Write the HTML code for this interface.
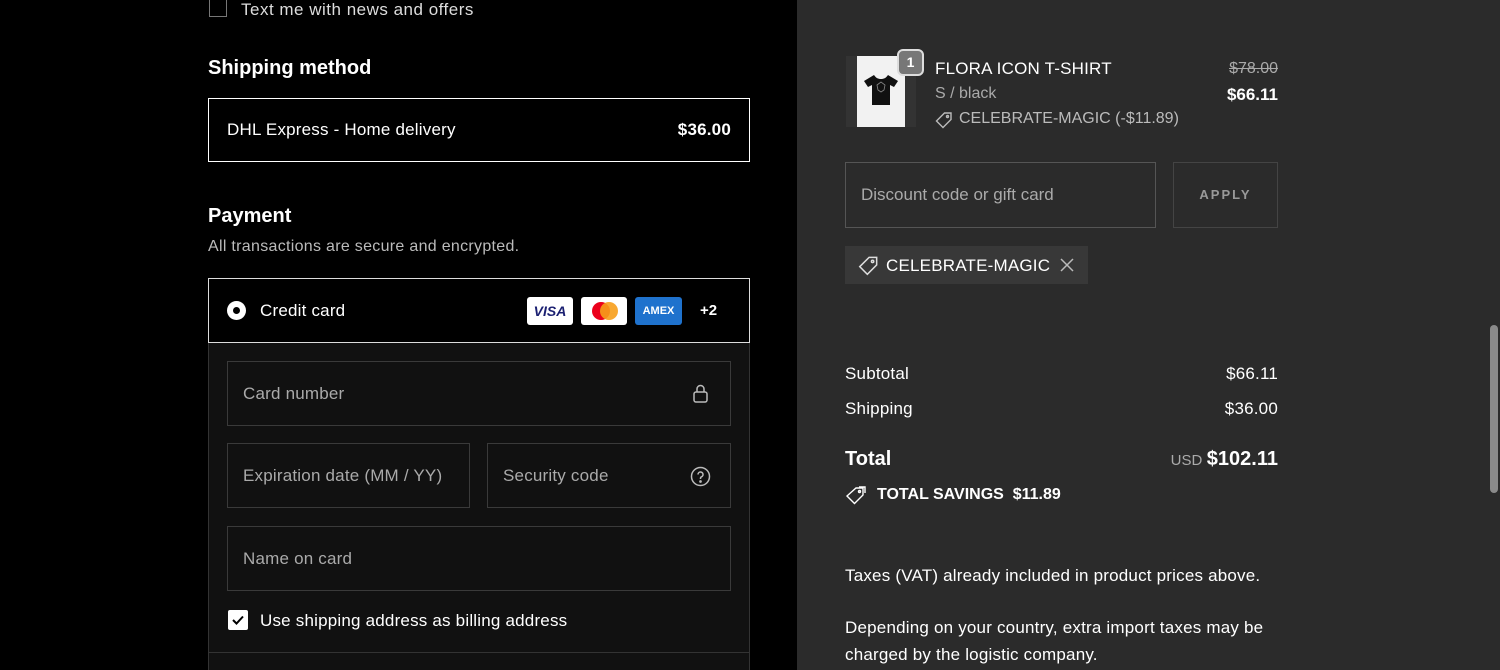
<!DOCTYPE html>
<html><head><style>
*{box-sizing:border-box;margin:0;padding:0}
body{width:1500px;height:670px;overflow:hidden;background:#000;font-family:"Liberation Sans",sans-serif;color:#fff;position:relative}
.a{position:absolute}
.right{left:797px;top:0;width:691px;height:670px;background:#2b2b2b}
.sb{left:1488px;top:0;width:12px;height:670px;background:#2b2b2b}
.thumb{left:1490px;top:325px;width:8px;height:168px;background:#8a8a8a;border-radius:4px}
.f{font-size:17px;letter-spacing:.2px}
.in{border:1px solid #3a3a3a;background:#111;color:#aaa;font-size:17px;letter-spacing:.2px;padding-left:15px;display:flex;align-items:center}
</style></head><body>
<div class="a" style="left:209px;top:0;width:18px;height:17px;border:1px solid #777;border-top:none"></div>
<div class="a f" style="left:241px;top:0;color:#ddd;letter-spacing:.5px">Text me with news and offers</div>
<div class="a" style="left:208px;top:57px;font-size:20px;font-weight:bold">Shipping method</div>
<div class="a" style="left:208px;top:98px;width:542px;height:64px;border:1px solid #fff;display:flex;align-items:center;justify-content:space-between;padding:0 18px"><span class="f">DHL Express - Home delivery</span><span class="f" style="font-weight:bold">$36.00</span></div>
<div class="a" style="left:208px;top:205px;font-size:20px;font-weight:bold">Payment</div>
<div class="a" style="left:208px;top:238px;font-size:16px;color:#bbb;letter-spacing:.3px">All transactions are secure and encrypted.</div>
<div class="a" style="left:208px;top:278px;width:542px;height:65px;border:1px solid #ddd"></div>
<div class="a" style="left:227px;top:301px;width:19px;height:19px;border-radius:50%;background:#fff"></div>
<div class="a" style="left:233px;top:307px;width:7px;height:7px;border-radius:50%;background:#000"></div>
<div class="a f" style="left:260px;top:301px">Credit card</div>
<div class="a" style="left:527px;top:297px;width:46px;height:28px;background:#fff;border-radius:3px;color:#1a1f71;font-weight:bold;font-style:italic;font-size:14px;text-align:center;line-height:28px">VISA</div>
<div class="a" style="left:581px;top:297px;width:46px;height:28px;background:#fff;border-radius:3px"></div>
<div class="a" style="left:592px;top:302px;width:18px;height:18px;border-radius:50%;background:#eb001b"></div>
<div class="a" style="left:600px;top:302px;width:18px;height:18px;border-radius:50%;background:#f79e1b;opacity:.9"></div>
<div class="a" style="left:635px;top:297px;width:47px;height:28px;background:#1f72cd;border-radius:3px;color:#fff;font-size:11px;font-weight:bold;text-align:center;line-height:28px">AMEX</div>
<div class="a" style="left:700px;top:302px;font-size:15px;font-weight:bold">+2</div>
<div class="a" style="left:208px;top:343px;width:542px;height:327px;background:#111;border-left:1px solid #333;border-right:1px solid #333"></div>
<div class="a in" style="left:227px;top:361px;width:504px;height:65px">Card number</div>
<svg class="a" style="left:692px;top:384px" width="18" height="20" viewBox="0 0 18 20" fill="none" stroke="#bbb" stroke-width="1.5"><rect x="2" y="8" width="13" height="10" rx="2"/><path d="M5 8V5a3.5 3.5 0 0 1 7 0v3"/></svg>
<div class="a in" style="left:227px;top:443px;width:243px;height:65px">Expiration date (MM / YY)</div>
<div class="a in" style="left:487px;top:443px;width:244px;height:65px">Security code</div>
<svg class="a" style="left:690px;top:466px" width="21" height="21" viewBox="0 0 21 21" fill="none" stroke="#bbb" stroke-width="1.5"><circle cx="10.5" cy="10.5" r="9"/><path d="M8 8.5a2.5 2.5 0 1 1 3.5 2.3c-.7.3-1 .8-1 1.5v.7"/><circle cx="10.5" cy="15.5" r=".6" fill="#bbb"/></svg>
<div class="a in" style="left:227px;top:526px;width:504px;height:65px">Name on card</div>
<div class="a" style="left:228px;top:610px;width:20px;height:20px;background:#fff;border-radius:2px"></div>
<svg class="a" style="left:228px;top:610px" width="20" height="20"><path d="M5 10l3.5 3.5L15 6.5" stroke="#000" stroke-width="2" fill="none"/></svg>
<div class="a f" style="left:260px;top:611px">Use shipping address as billing address</div>
<div class="a" style="left:208px;top:652px;width:542px;height:1px;background:#333"></div>

<div class="a right"></div><div class="a sb"></div><div class="a thumb"></div>
<div class="a" style="left:846px;top:56px;width:70px;height:71px;background:#333"></div>
<div class="a" style="left:857px;top:56px;width:48px;height:71px;background:#f2f2f2"></div>
<svg class="a" style="left:862px;top:73px" width="38" height="34" viewBox="0 0 38 34"><path d="M12 2l-10 6 4 6 4-2v20h18V12l4 2 4-6-10-6c-2 3-4 4-7 4s-5-1-7-4z" fill="#111"/><path d="M15 12l4-3 4 3-1 5-3 2-3-2z" fill="none" stroke="#888" stroke-width=".8"/></svg>
<div class="a" style="left:897px;top:49px;width:27px;height:27px;border-radius:6px;background:#777;border:2px solid #ddd;font-size:14px;font-weight:bold;text-align:center;line-height:23px">1</div>
<div class="a f" style="left:935px;top:59px">FLORA ICON T-SHIRT</div>
<div class="a" style="left:935px;top:85px;font-size:16px;color:#aaa">S / black</div>
<svg class="a" style="left:935px;top:111px" width="18" height="18" viewBox="0 0 18 18" fill="none" stroke="#bbb" stroke-width="1.4"><path d="M9.5 2H16v6.5L8 16.5 1.5 10z"/><circle cx="12.5" cy="5.5" r="1"/></svg>
<div class="a" style="left:959px;top:110px;font-size:16px;color:#bbb">CELEBRATE-MAGIC (-$11.89)</div>
<div class="a" style="left:1200px;top:60px;width:78px;text-align:right;font-size:16px;color:#aaa;text-decoration:line-through">$78.00</div>
<div class="a" style="left:1200px;top:85px;width:78px;text-align:right;font-size:17px;font-weight:bold">$66.11</div>
<div class="a" style="left:845px;top:162px;width:311px;height:66px;border:1px solid #555;color:#aaa;font-size:17px;padding-left:15px;line-height:64px">Discount code or gift card</div>
<div class="a" style="left:1173px;top:162px;width:105px;height:66px;border:1px solid #444;color:#999;font-size:13px;font-weight:bold;letter-spacing:2px;text-align:center;line-height:64px">APPLY</div>
<div class="a" style="left:845px;top:246px;width:243px;height:38px;background:#383838"></div>
<svg class="a" style="left:858px;top:255px" width="21" height="21" viewBox="0 0 18 18" fill="none" stroke="#ddd" stroke-width="1.3"><path d="M9.5 2H16v6.5L8 16.5 1.5 10z"/><circle cx="12.5" cy="5.5" r="1"/></svg>
<div class="a f" style="left:886px;top:256px">CELEBRATE-MAGIC</div>
<svg class="a" style="left:1060px;top:258px" width="14" height="14"><path d="M1 1l12 12M13 1L1 13" stroke="#bbb" stroke-width="1.5"/></svg>
<div class="a f" style="left:845px;top:364px">Subtotal</div><div class="a f" style="left:1178px;top:364px;width:100px;text-align:right">$66.11</div>
<div class="a f" style="left:845px;top:399px">Shipping</div><div class="a f" style="left:1178px;top:399px;width:100px;text-align:right">$36.00</div>
<div class="a" style="left:845px;top:448px;font-size:20px;font-weight:bold">Total</div>
<div class="a" style="left:1100px;top:448px;width:178px;text-align:right"><span style="font-size:15px;color:#aaa">USD</span> <span style="font-size:20px;font-weight:bold">$102.11</span></div>
<svg class="a" style="left:845px;top:486px" width="22" height="20" viewBox="0 0 22 20" fill="none" stroke="#fff" stroke-width="1.4"><path d="M11 2h7v7l-8.5 8.5L2 10z"/><path d="M14 1h6v6" /><circle cx="14.5" cy="5.5" r="1"/></svg>
<div class="a" style="left:877px;top:486px;font-size:16px;font-weight:bold">TOTAL SAVINGS&nbsp; $11.89</div>
<div class="a f" style="left:845px;top:566px">Taxes (VAT) already included in product prices above.</div>
<div class="a f" style="left:845px;top:614px;line-height:27px">Depending on your country, extra import taxes may be<br>charged by the logistic company.</div>
</body></html>
